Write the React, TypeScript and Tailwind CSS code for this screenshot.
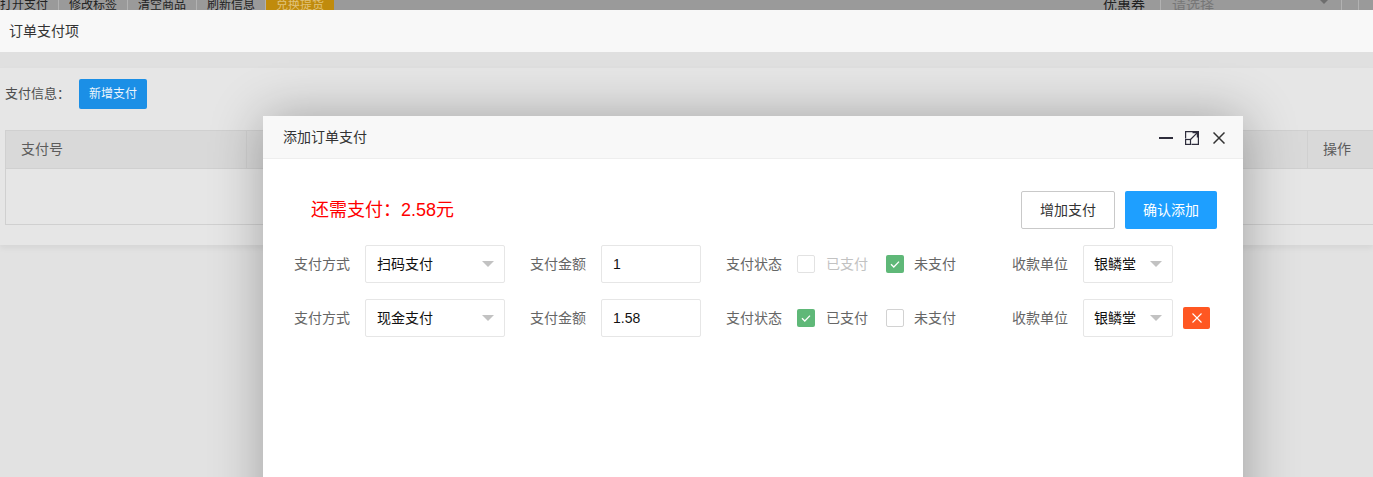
import React from "react";

function Tri() {
  return (
    <svg width="12" height="6" viewBox="0 0 12 6" className="shrink-0">
      <polygon points="0,0 12,0 6,6" fill="#c2c2c2" />
    </svg>
  );
}

function Check({ checked, light }: { checked: boolean; light?: boolean }) {
  if (checked) {
    return (
      <span className="block w-[18px] h-[18px] rounded-[2px] bg-[#5FB878] shrink-0">
        <svg width="18" height="18" viewBox="0 0 18 18" fill="none" className="block">
          <path d="M5 9.2 L7.8 12 L13 6.6" stroke="#fff" strokeWidth="1.3" />
        </svg>
      </span>
    );
  }
  return (
    <span
      className={
        light
          ? "block w-[18px] h-[18px] rounded-[2px] border border-[#e2e2e2] bg-white shrink-0"
          : "block w-[18px] h-[18px] rounded-[2px] border border-[#d2d2d2] bg-white shrink-0"
      }
    />
  );
}

function Row({ method, amount, paid, first }: { method: string; amount: string; paid: boolean; first?: boolean }) {
  return (
    <div className="flex items-center h-[38px] pl-[31px] text-[14px]">
      <span className="w-[56px] text-[#666] whitespace-nowrap">支付方式</span>
      <div className="ml-[15px] w-[140px] h-[38px] border border-[#e6e6e6] rounded-[2px] flex items-center justify-between pl-[11px] pr-[10px] bg-white">
        <span className="text-[#111]">{method}</span>
        <Tri />
      </div>
      <span className="ml-[25px] w-[56px] text-[#666] whitespace-nowrap">支付金额</span>
      <div className="ml-[15px] w-[100px] h-[38px] border border-[#e6e6e6] rounded-[2px] flex items-center pl-[11px] bg-white text-[#111]">
        {amount}
      </div>
      <span className="ml-[25px] w-[56px] text-[#666] whitespace-nowrap">支付状态</span>
      <div className="ml-[15px] flex">
        <Check checked={paid} light={first} />
      </div>
      <span className={first ? "ml-[11px] w-[42px] text-[#c2c2c2] whitespace-nowrap" : "ml-[11px] w-[42px] text-[#666] whitespace-nowrap"}>
        已支付
      </span>
      <div className="ml-[18px] flex">
        <Check checked={!paid} />
      </div>
      <span className="ml-[10px] w-[42px] text-[#666] whitespace-nowrap">未支付</span>
      <span className="ml-[56px] w-[56px] text-[#666] whitespace-nowrap">收款单位</span>
      <div className="ml-[15px] w-[90px] h-[38px] border border-[#e6e6e6] rounded-[2px] flex items-center justify-between pl-[10px] pr-[10px] bg-white">
        <span className="text-[#111]">银鳞堂</span>
        <Tri />
      </div>
      {!first && (
        <button className="ml-[10px] w-[27px] h-[22px] bg-[#FF5722] rounded-[2px] flex items-center justify-center">
          <svg width="10" height="10" viewBox="0 0 10 10" fill="none">
            <path d="M0.5 0.5 L9.5 9.5 M9.5 0.5 L0.5 9.5" stroke="#fff" strokeWidth="1.1" />
          </svg>
        </button>
      )}
    </div>
  );
}

export default function App() {
  return (
    <div className="relative w-[1373px] h-[477px] overflow-hidden bg-[#e2e2e2] font-['Liberation_Sans','Noto_Sans_CJK_SC',sans-serif]">
      {/* top toolbar (dimmed page) */}
      <div className="h-[10px] overflow-hidden bg-[#9a9a9a]">
        <div className="-mt-[6px] flex h-[22px]">
          <div className="flex">
            <span className="-ml-[10px] px-[10px] border-r border-[#b2b2b2] text-[12px] leading-[22px] text-[#222] whitespace-nowrap">打开支付</span>
            <span className="px-[10px] border-r border-[#b2b2b2] text-[12px] leading-[22px] text-[#222] whitespace-nowrap">修改标签</span>
            <span className="px-[10px] border-r border-[#b2b2b2] text-[12px] leading-[22px] text-[#222] whitespace-nowrap">清空商品</span>
            <span className="px-[10px] border-r border-[#b2b2b2] text-[12px] leading-[22px] text-[#222] whitespace-nowrap">刷新信息</span>
            <span className="px-[10px] bg-[#c08b0c] text-[12px] leading-[22px] text-[#e0c27a] whitespace-nowrap">兑换提货</span>
          </div>
          <div className="ml-auto flex h-[22px]">
            <span className="w-[57px] text-[14px] leading-[22px] text-[#222] whitespace-nowrap">优惠券</span>
            <div className="w-[181px] border-l border-[#b2b2b2] flex items-center justify-between pl-[11px] pr-[12px]">
              <span className="text-[14px] leading-[22px] text-[#777] whitespace-nowrap">请选择</span>
              <svg width="10" height="5" viewBox="0 0 10 5" className="mt-[-8px]">
                <polygon points="0,0 10,0 5,5" fill="#6e6e6e" />
              </svg>
            </div>
            <div className="w-[17px] border-l border-[#b2b2b2]" />
            <div className="w-[15px] border-l border-[#b2b2b2]" />
          </div>
        </div>
      </div>

      {/* outer layer */}
      <div className="h-[42px] bg-[#f8f8f8] flex items-center pl-[9px] text-[14px] text-[#333]">订单支付项</div>
      <div className="pt-[16px] bg-[#e0e0e0]">
        <div className="bg-[#e6e6e6] pt-[11px] pb-[20px] pl-[5px] overflow-hidden shadow-[0_3px_6px_rgba(0,0,0,0.06)]">
          <div className="flex items-center h-[30px]">
            <span className="w-[74px] text-[13px] text-[#4e4e4e]">支付信息：</span>
            <button className="h-[30px] px-[10px] bg-[#1b8fe6] rounded-[2px] text-[12px] text-[#eef5fb]">新增支付</button>
          </div>
          <div className="mt-[21px] w-[1400px] border border-[#d0d0d0]">
            <div className="flex h-[38px] bg-[#d9d9d9] border-b border-[#d0d0d0] text-[14px] text-[#5c5c5c]">
              <div className="w-[241px] border-r border-[#d0d0d0] pl-[15px] flex items-center">支付号</div>
              <div className="w-[1061px] border-r border-[#d0d0d0]" />
              <div className="flex-1 pl-[15px] flex items-center">操作</div>
            </div>
            <div className="h-[55px]" />
          </div>
        </div>
      </div>

      {/* dialog */}
      <div className="absolute left-[263px] top-[116px] w-[980px] h-[420px] bg-white shadow-[1px_1px_50px_rgba(0,0,0,0.3)]">
        <div className="h-[43px] bg-[#f8f8f8] border-b border-[#eee] flex items-center justify-between pl-[20px] pr-[18px]">
          <span className="text-[14px] text-[#333]">添加订单支付</span>
          <div className="flex items-center mt-[2px]">
            <span className="w-[14px] h-[2px] bg-[#2e2d3c]" />
            <svg width="14" height="14" viewBox="0 0 14 14" fill="none" stroke="#2e2d3c" strokeWidth="1.2" className="ml-[12px]">
              <path d="M0.6 7.5 V0.6 H13.4 V13.4 H6.5" />
              <rect x="0.6" y="8.5" width="4.9" height="4.9" />
              <path d="M5.5 8.5 L12.4 1.6 M7.5 1.6 H12.4 V6.5" />
            </svg>
            <svg width="12" height="12" viewBox="0 0 12 12" fill="none" stroke="#333" strokeWidth="1.5" className="ml-[14px]">
              <path d="M0.5 0.5 L11.5 11.5 M11.5 0.5 L0.5 11.5" />
            </svg>
          </div>
        </div>
        <div className="pt-[32px]">
          <div className="flex items-center justify-between h-[38px] pl-[48px] pr-[26px]">
            <span className="text-[18px] text-[#ff0000]">还需支付：2.58元</span>
            <div className="flex items-center">
              <button className="h-[38px] px-[18px] border border-[#c9c9c9] rounded-[2px] bg-white text-[14px] text-[#333]">增加支付</button>
              <button className="ml-[10px] h-[38px] px-[18px] rounded-[2px] bg-[#1E9FFF] text-[14px] text-white">确认添加</button>
            </div>
          </div>
          <div className="mt-[16px]">
            <Row method="扫码支付" amount="1" paid={false} first />
          </div>
          <div className="mt-[16px]">
            <Row method="现金支付" amount="1.58" paid={true} />
          </div>
        </div>
      </div>
    </div>
  );
}
